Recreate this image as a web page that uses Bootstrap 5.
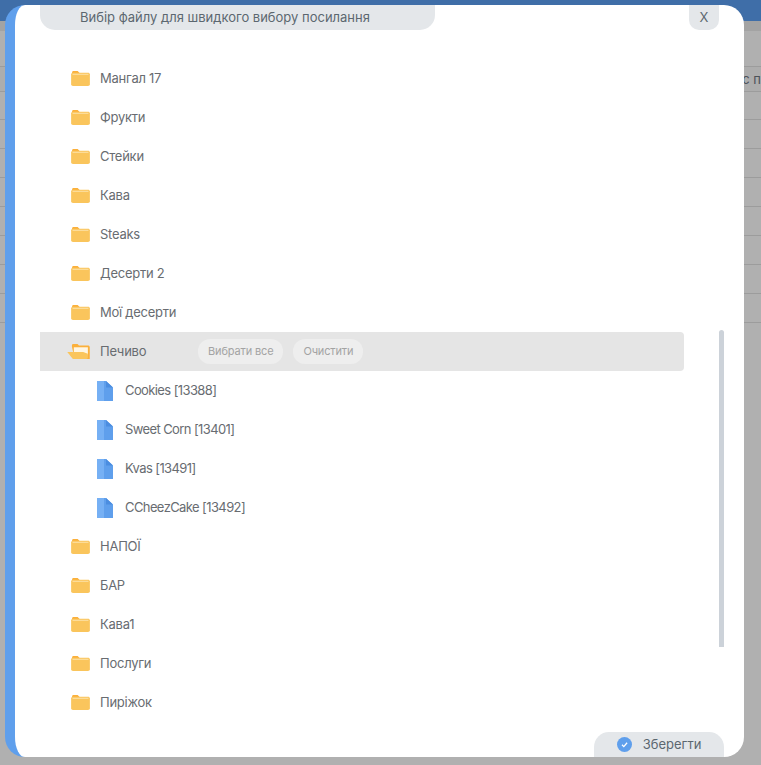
<!DOCTYPE html>
<html lang="uk">
<head>
  <meta charset="UTF-8" />
  <title>Вибір файлу</title>
  <link href="https://cdn.jsdelivr.net/npm/bootstrap@5.3.0/dist/css/bootstrap.min.css" rel="stylesheet">
  <style>
    html, body { height: 100%; overflow: hidden; }
    body {
      background: #b0b0b0;
      font-family: "Inter", "Noto Sans", sans-serif;
      font-size: 13px;
      color: #686c71;
    }
    .top-strip { height: 21px; background: #3f6ea8; }
    .top-band { height: 10px; background: #a3a3a3; }
    .back-head { height: 36px; border-bottom: 1px solid #9c9c9c; }
    .back-head2 { height: 25px; border-bottom: 1px solid #9c9c9c; background: #adadad; }
    .back-line { height: 28px; border-bottom: 1px solid #9c9c9c; }
    .back-line.is-tall { height: 29px; }
    .back-text { position: absolute; right: 0; top: 70px; color: #4c5258; font-size: 13px; }
    .modal-box {
      position: absolute; left: 5px; top: 5px; width: 739px; height: 752px;
      background: #fff; border-radius: 20px; border-left: 10px solid #5f9fec;
    }
    .head-row { padding: 0 25px; height: 25px; }
    .head-title {
      width: 395px; background: #e4e7ea; border-radius: 0 0 15px 15px;
      padding-left: 40px; line-height: 25px; color: #5c6770;
    }
    .head-close {
      width: 30px; background: #e4e7ea; border-radius: 0 0 10px 10px;
      text-align: center; line-height: 25px; color: #5c6770;
    }
    .tree-list { position: absolute; top: 54px; left: 25px; width: 644px; letter-spacing: -.25px; }
    .tree-item { height: 39px; padding-left: 31px; gap: 10px; }
    .tree-item.is-file { padding-left: 57px; gap: 12px; letter-spacing: -.6px; }
    .tree-item.is-open { background: #e5e5e5; border-radius: 0 4px 4px 0; padding-left: 27px; }
    .tree-name { width: 88px; }
    .tree-btns { gap: 10px; }
    .tree-btn {
      background: #eeeeee; color: #a3a3a3; border-radius: 12px; height: 25px;
      line-height: 25px; padding: 0 10px; font-size: 11px; letter-spacing: -.15px;
    }
    .scroll-thumb {
      position: absolute; left: 704px; top: 325px; width: 5px; height: 317px;
      background: #ccd2d9; border-radius: 3px 3px 0 0;
    }
    .save-btn {
      position: absolute; left: 579px; bottom: 0; width: 130px; height: 25px;
      background: #e4e7ea; border-radius: 15px 15px 0 0; color: #5c6770; gap: 11px;
    }
  </style>
</head>
<body>
  <div class="top-strip"></div>
  <div class="top-band"></div>
  <div class="back-head"></div>
  <div class="back-head2"></div>
  <div class="back-line"></div><div class="back-line is-tall"></div><div class="back-line is-tall"></div>
  <div class="back-line is-tall"></div><div class="back-line is-tall"></div><div class="back-line is-tall"></div>
  <div class="back-line is-tall"></div><div class="back-line is-tall"></div>
  <span class="back-text">с п</span>

  <svg width="0" height="0" class="d-block position-absolute">
    <symbol id="ico-folder" viewBox="0 0 20 16">
      <path d="M1 3V1.500C1 .7 1.700 0 2.500 0H7l2 2H1z" fill="#fbb03b"/>
      <path d="M0 3.500C0 2.400.9 1.800 2 1.800h16c1.100 0 2 .7 2 1.700V14.500c0 .9-.9 1.500-2 1.500H2c-1.100 0-2-.6-2-1.500z" fill="#fac55c"/>
      <path d="M1.500 3h17v1h-17z" fill="#fde3ad"/>
    </symbol>
    <symbol id="ico-open" viewBox="0 0 24 16">
      <path d="M5 3V1.500C5 .7 5.600 0 6.400 0H11l1.500 1.500H22c1.100 0 2 .7 2 1.700V16H8z" fill="#fbb03b"/>
      <path d="M7 3.500h15V12H7z" fill="#fff6e3"/>
      <path d="M0 8.500h17l5 2V14.500c0 .9-.7 1.500-1.500 1.500H6z" fill="#fac55c"/>
    </symbol>
    <symbol id="ico-file" viewBox="0 0 16 20">
      <path d="M0 0h9l7 6.500V20H0z" fill="#5f9fec"/>
      <path d="M0 0h7v20H0z" fill="#76b0f4"/>
      <path d="M9 0l7 6.500H9z" fill="#4b8de0"/>
    </symbol>
  </svg>

  <div class="modal-box">
    <div class="head-row d-flex justify-content-between">
      <div class="head-title">Вибір файлу для швидкого вибору посилання</div>
      <div class="head-close">X</div>
    </div>

    <div class="tree-list" id="tree"></div>
    <div class="scroll-thumb"></div>

    <div class="save-btn d-flex align-items-center justify-content-center">
      <svg width="15" height="15" viewBox="0 0 15 15">
        <circle cx="7.500" cy="7.500" r="7.500" fill="#5f9fec"/>
        <path d="M5 7.800l1.800 1.800 3.300-3.800" fill="none" stroke="#fff" stroke-width="1.300"/>
      </svg>
      <span>Зберегти</span>
    </div>
  </div>

  <script>
    const items = [
      ['d', 'Мангал 17'], ['d', 'Фрукти'], ['d', 'Стейки'], ['d', 'Кава'], ['d', 'Steaks'],
      ['d', 'Десерти 2'], ['d', 'Мої десерти'], ['o', 'Печиво'],
      ['f', 'Cookies [13388]'], ['f', 'Sweet Corn [13401]'], ['f', 'Kvas [13491]'], ['f', 'CCheezCake [13492]'],
      ['d', 'НАПОЇ'], ['d', 'БАР'], ['d', 'Кава1'], ['d', 'Послуги'], ['d', 'Пиріжок']
    ];
    let html = '';
    items.forEach(([type, name]) => {
      if (type === 'd') {
        html += `<div class="tree-item d-flex align-items-center"><svg width="19" height="15"><use href="#ico-folder"/></svg><span>${name}</span></div>`;
      } else if (type === 'f') {
        html += `<div class="tree-item is-file d-flex align-items-center"><svg width="16" height="20"><use href="#ico-file"/></svg><span>${name}</span></div>`;
      } else {
        html += `<div class="tree-item is-open d-flex align-items-center"><svg width="23" height="15"><use href="#ico-open"/></svg><span class="tree-name">${name}</span><div class="tree-btns d-flex"><span class="tree-btn">Вибрати все</span><span class="tree-btn">Очистити</span></div></div>`;
      }
    });
    document.getElementById('tree').innerHTML = html;
  </script>
  <script src="https://cdn.jsdelivr.net/npm/bootstrap@5.3.0/dist/js/bootstrap.bundle.min.js"></script>
</body>
</html>
